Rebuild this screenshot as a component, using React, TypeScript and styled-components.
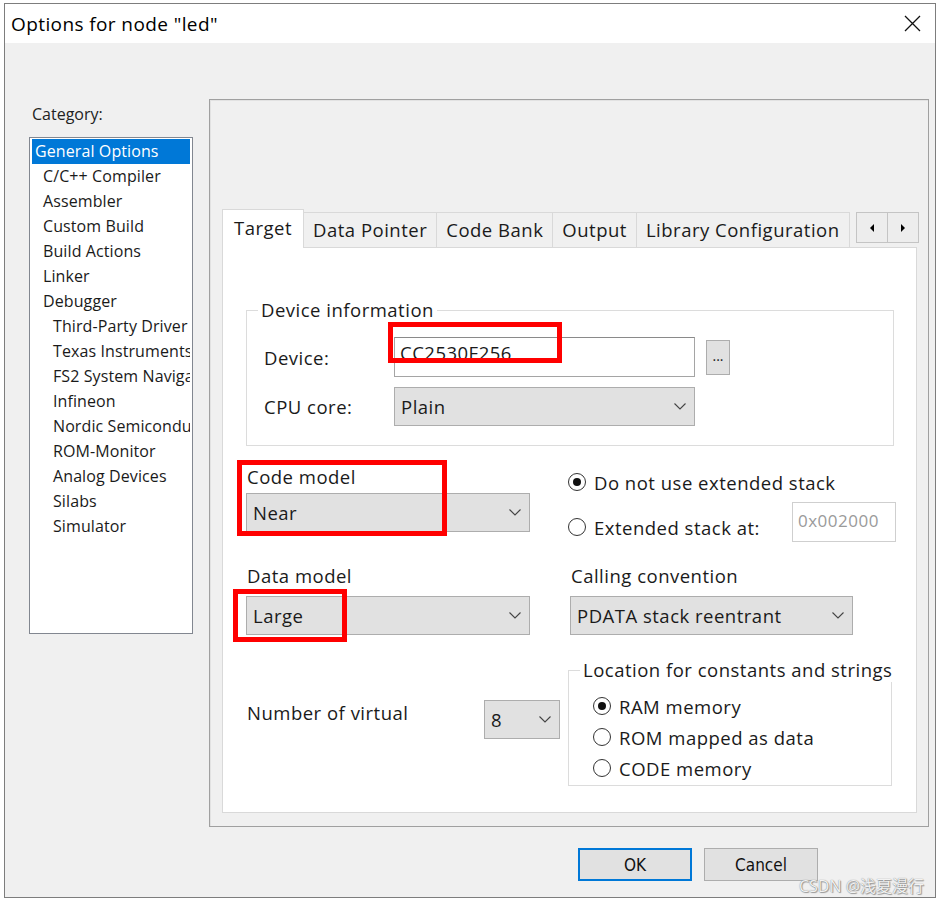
import React from "react";
import styled, { createGlobalStyle } from "styled-components";

/** ===========================================================================
 * Options dialog for a project node
 * ============================================================================
 */

const FONT = `"Open Sans", "Noto Sans", "Noto Sans CJK SC", sans-serif`;

type CategoryItem = { label: string; level: number };

const CATEGORIES: CategoryItem[] = [
  { label: "General Options", level: 0 },
  { label: "C/C++ Compiler", level: 1 },
  { label: "Assembler", level: 1 },
  { label: "Custom Build", level: 1 },
  { label: "Build Actions", level: 1 },
  { label: "Linker", level: 1 },
  { label: "Debugger", level: 1 },
  { label: "Third-Party Driver", level: 2 },
  { label: "Texas Instruments", level: 2 },
  { label: "FS2 System Navigator", level: 2 },
  { label: "Infineon", level: 2 },
  { label: "Nordic Semiconductor", level: 2 },
  { label: "ROM-Monitor", level: 2 },
  { label: "Analog Devices", level: 2 },
  { label: "Silabs", level: 2 },
  { label: "Simulator", level: 2 },
];

const TABS = [
  "Target",
  "Data Pointer",
  "Code Bank",
  "Output",
  "Library Configuration",
];

const INDENT = [3, 11, 21];

const App: React.FC = () => {
  return (
    <Page>
      <GlobalStyle />
      <Dialog>
        <TitleBar>
          <Title>Options for node "led"</Title>
          <CloseIcon />
        </TitleBar>
        <Content>
          <MainRow>
            <Sidebar>
              <CategoryLabel>Category:</CategoryLabel>
              <ListBox>
                {CATEGORIES.map((c, i) => (
                  <ListItem
                    key={c.label}
                    $indent={INDENT[c.level]}
                    $selected={i === 0}
                  >
                    {c.label}
                  </ListItem>
                ))}
              </ListBox>
            </Sidebar>

            <Panel>
              <TabStrip>
                {TABS.map((t, i) => (
                  <Tab key={t} $active={i === 0}>
                    {t}
                  </Tab>
                ))}
                <ArrowGroup>
                  <ArrowButton>
                    <svg width="6" height="8" viewBox="0 0 6 8">
                      <polygon points="5,0 5,8 1,4" fill="#000" />
                    </svg>
                  </ArrowButton>
                  <ArrowButton>
                    <svg width="6" height="8" viewBox="0 0 6 8">
                      <polygon points="1,0 1,8 5,4" fill="#000" />
                    </svg>
                  </ArrowButton>
                </ArrowGroup>
              </TabStrip>

              <TabPage>
                <GroupBox>
                  <GroupLegend $shift={-6}>Device information</GroupLegend>
                  <FieldRow>
                    <FormLabel>Device:</FormLabel>
                    <Annotated>
                      <TextInput $w={301}>CC2530F256</TextInput>
                      <RedBox $l={-6} $t={-15} $w={174} $h={41} />
                    </Annotated>
                    <DotsButton>...</DotsButton>
                  </FieldRow>
                  <FieldRow $gap={10}>
                    <FormLabel>CPU core:</FormLabel>
                    <Select $w={301} value="Plain" />
                  </FieldRow>
                </GroupBox>

                <OptionsGrid>
                  <Cell>
                    <FieldLabel>Code model</FieldLabel>
                    <Select $w={284} $mt={5} value="Near" />
                    <RedBox $l={-9} $t={-6} $w={210} $h={76} />
                  </Cell>
                  <Cell>
                    <RadioLine $mt={4}>
                      <Radio $checked />
                      Do not use extended stack
                    </RadioLine>
                    <StackRow>
                      <RadioLine $mt={13}>
                        <Radio />
                        Extended stack at:
                      </RadioLine>
                      <HexInput>0x002000</HexInput>
                    </StackRow>
                  </Cell>

                  <Cell>
                    <FieldLabel>Data model</FieldLabel>
                    <Annotated $mt={9}>
                      <Select $w={284} value="Large" />
                      <RedBox $l={-13} $t={-7} $w={114} $h={53} />
                    </Annotated>
                  </Cell>
                  <Cell $ml={2}>
                    <FieldLabel>Calling convention</FieldLabel>
                    <Select $w={283} $mt={9} value="PDATA stack reentrant" />
                  </Cell>

                  <VirtualCell>
                    <VirtualLabel>Number of virtual</VirtualLabel>
                    <Select $w={76} value="8" />
                  </VirtualCell>
                  <Cell>
                    <LocationBox>
                      <GroupLegend $shift={-13}>
                        Location for constants and strings
                      </GroupLegend>
                      <RadioLine>
                        <Radio $checked />
                        RAM memory
                      </RadioLine>
                      <RadioLine $mt={7}>
                        <Radio />
                        ROM mapped as data
                      </RadioLine>
                      <RadioLine $mt={7}>
                        <Radio />
                        CODE memory
                      </RadioLine>
                    </LocationBox>
                  </Cell>
                </OptionsGrid>
              </TabPage>
            </Panel>
          </MainRow>

          <ButtonBar>
            <DialogButton $default>OK</DialogButton>
            <DialogButton>Cancel</DialogButton>
          </ButtonBar>
        </Content>
      </Dialog>
      <Watermark>CSDN @浅夏漫行</Watermark>
    </Page>
  );
};

/** ===========================================================================
 * Small drawn parts
 * ============================================================================
 */

const CloseIcon = () => (
  <svg width="17" height="17" viewBox="0 0 17 17">
    <path d="M1 1 L16 16 M16 1 L1 16" stroke="#111" strokeWidth="1.3" />
  </svg>
);

const Chevron = () => (
  <svg width="12" height="7" viewBox="0 0 12 7">
    <polyline
      points="0.5,0.5 6,6 11.5,0.5"
      fill="none"
      stroke="#444"
      strokeWidth="1.1"
    />
  </svg>
);

const Select = (props: { $w: number; $mt?: number; value: string }) => (
  <SelectBox $w={props.$w} $mt={props.$mt}>
    <span>{props.value}</span>
    <Chevron />
  </SelectBox>
);

/** ===========================================================================
 * Styled Components
 * ============================================================================
 */

const GlobalStyle = createGlobalStyle`
  html, body {
    margin: 0;
    padding: 0;
    background: #fff;
  }
  body {
    font-family: ${FONT};
    color: #1a1a1a;
    letter-spacing: 0.5px;
  }
`;

const Page = styled.div`
  position: relative;
  height: 903px;
  padding: 3px 0 0 4px;
  box-sizing: border-box;
  overflow: hidden;
`;

const Dialog = styled.div`
  width: 932px;
  height: 895px;
  box-sizing: border-box;
  border: 1px solid #7d7d7d;
  background: #f0f0f0;
  display: flex;
  flex-direction: column;
`;

const TitleBar = styled.div`
  height: 39px;
  flex: none;
  background: #fff;
  display: flex;
  align-items: center;
  justify-content: space-between;
  padding: 0 14px 0 6px;
`;

const Title = styled.div`
  font-size: 19px;
  letter-spacing: 0.4px;
  color: #000;
`;

const Content = styled.div`
  flex: 1;
  display: flex;
  flex-direction: column;
`;

const MainRow = styled.div`
  display: flex;
  align-items: flex-start;
`;

const Sidebar = styled.div`
  width: 164px;
  padding: 61px 0 0 24px;
  flex: none;
`;

const CategoryLabel = styled.div`
  font-size: 16px;
  line-height: 20px;
  letter-spacing: 0;
  margin: 0 0 13px 3px;
  color: #222;
`;

const ListBox = styled.div`
  width: 164px;
  height: 497px;
  box-sizing: border-box;
  border: 1px solid #828790;
  background: #fff;
  padding: 1px 2px;
  overflow: hidden;
`;

const ListItem = styled.div<{ $indent: number; $selected?: boolean }>`
  height: 25px;
  line-height: 25px;
  font-size: 16px;
  letter-spacing: 0.1px;
  white-space: nowrap;
  overflow: hidden;
  padding-left: ${(p) => p.$indent}px;
  background: ${(p) => (p.$selected ? "#0078d7" : "transparent")};
  color: ${(p) => (p.$selected ? "#fff" : "#1a1a1a")};
`;

const Panel = styled.div`
  margin: 56px 0 0 16px;
  width: 720px;
  height: 728px;
  box-sizing: border-box;
  border: 1px solid #a0a0a0;
  box-shadow: inset 1px 1px 0 #e2e2e2;
  padding: 109px 11px 13px 12px;
  display: flex;
  flex-direction: column;
`;

const TabStrip = styled.div`
  height: 38px;
  flex: none;
  display: flex;
  align-items: flex-end;
  position: relative;
  z-index: 1;
`;

const Tab = styled.div<{ $active?: boolean }>`
  height: ${(p) => (p.$active ? 39 : 35)}px;
  margin-bottom: ${(p) => (p.$active ? -1 : 0)}px;
  margin-left: ${(p) => (p.$active ? 0 : -1)}px;
  padding: 0 ${(p) => (p.$active ? 11 : 9)}px;
  box-sizing: border-box;
  border: 1px solid #d9d9d9;
  border-bottom: none;
  background: ${(p) => (p.$active ? "#fff" : "#f0f0f0")};
  display: flex;
  align-items: center;
  padding-bottom: ${(p) => (p.$active ? 4 : 1)}px;
  font-size: 18.5px;
  white-space: nowrap;
  position: relative;
  z-index: ${(p) => (p.$active ? 2 : 1)};
`;

const ArrowGroup = styled.div`
  margin-left: auto;
  margin-right: -2px;
  align-self: flex-start;
  margin-top: 3px;
  display: flex;
  border: 1px solid #c4c4c4;
  background: #ededed;
`;

const ArrowButton = styled.div`
  width: 30px;
  height: 29px;
  display: flex;
  align-items: center;
  justify-content: center;
  & + & {
    border-left: 1px solid #c4c4c4;
  }
`;

const TabPage = styled.div`
  flex: 1;
  background: #fff;
  border: 1px solid #d9d9d9;
  padding: 50px 22px 0 23px;
`;

const GroupBox = styled.fieldset`
  margin: 0;
  min-width: 0;
  border: 1px solid #dcdcdc;
  padding: 15px 17px 19px;
`;

const GroupLegend = styled.legend<{ $shift: number }>`
  font-size: 18.5px;
  line-height: 24px;
  padding: 0 3px;
  margin-left: ${(p) => p.$shift}px;
  white-space: nowrap;
`;

const FieldRow = styled.div<{ $gap?: number }>`
  display: flex;
  align-items: center;
  margin-top: ${(p) => p.$gap ?? 0}px;
`;

const FormLabel = styled.div`
  width: 130px;
  flex: none;
  font-size: 18.5px;
`;

const Annotated = styled.div<{ $mt?: number }>`
  position: relative;
  margin-top: ${(p) => p.$mt ?? 0}px;
  width: fit-content;
`;

const RedBox = styled.div<{ $l: number; $t: number; $w: number; $h: number }>`
  position: absolute;
  left: ${(p) => p.$l}px;
  top: ${(p) => p.$t}px;
  width: ${(p) => p.$w}px;
  height: ${(p) => p.$h}px;
  box-sizing: border-box;
  border: 5px solid #ff0000;
  z-index: 3;
  pointer-events: none;
`;

const TextInput = styled.div<{ $w: number }>`
  width: ${(p) => p.$w}px;
  height: 40px;
  box-sizing: border-box;
  border: 1px solid #a5a5a5;
  border-top-color: #8a8a8a;
  background: #fff;
  padding: 3px 5px 0;
  font-size: 18.5px;
  line-height: 24px;
`;

const DotsButton = styled.div`
  width: 24px;
  height: 35px;
  margin-left: 11px;
  box-sizing: border-box;
  border: 1px solid #adadad;
  background: #e1e1e1;
  display: flex;
  align-items: center;
  justify-content: center;
  font-size: 14px;
  letter-spacing: 0;
  padding-bottom: 4px;
`;

const SelectBox = styled.div<{ $w: number; $mt?: number }>`
  width: ${(p) => p.$w}px;
  height: 39px;
  flex: none;
  margin-top: ${(p) => p.$mt ?? 0}px;
  box-sizing: border-box;
  border: 1px solid #adadad;
  background: #e1e1e1;
  display: flex;
  align-items: center;
  justify-content: space-between;
  padding: 0 8px 0 6px;
  font-size: 18.5px;
`;

const OptionsGrid = styled.div`
  margin-top: 20px;
  display: grid;
  grid-template-columns: 284px 326px;
  column-gap: 38px;
  row-gap: 23px;
`;

const Cell = styled.div<{ $ml?: number }>`
  position: relative;
  display: flex;
  flex-direction: column;
  margin-left: ${(p) => p.$ml ?? 0}px;
`;

const FieldLabel = styled.div`
  font-size: 18.5px;
  line-height: 22px;
  padding-left: 1px;
`;

const RadioLine = styled.div<{ $mt?: number }>`
  display: flex;
  align-items: center;
  gap: 8px;
  height: 24px;
  margin-top: ${(p) => p.$mt ?? 0}px;
  font-size: 18.5px;
  white-space: nowrap;
`;

const Radio = styled.span<{ $checked?: boolean }>`
  width: 18px;
  height: 18px;
  flex: none;
  box-sizing: border-box;
  border-radius: 50%;
  border: 1px solid #333;
  background: #fff;
  display: flex;
  align-items: center;
  justify-content: center;

  &::after {
    content: "";
    width: 8px;
    height: 8px;
    border-radius: 50%;
    background: #111;
    display: ${(p) => (p.$checked ? "block" : "none")};
  }
`;

const StackRow = styled.div`
  display: flex;
  align-items: flex-start;
  justify-content: space-between;
  margin-top: 8px;
  margin-right: -2px;
`;

const HexInput = styled.div`
  width: 104px;
  height: 40px;
  box-sizing: border-box;
  border: 1px solid #cfcfcf;
  background: #fff;
  color: #9a9a9a;
  font-size: 17px;
  padding-left: 5px;
  display: flex;
  align-items: center;
  padding-bottom: 3px;
`;

const VirtualCell = styled.div`
  display: flex;
  align-items: flex-start;
  padding-top: 42px;
`;

const VirtualLabel = styled.div`
  width: 238px;
  flex: none;
  font-size: 18.5px;
  line-height: 22px;
  margin-top: 2px;
  padding-left: 1px;
  box-sizing: border-box;
`;

const LocationBox = styled.fieldset`
  margin: 0;
  min-width: 0;
  width: 324px;
  box-sizing: border-box;
  border: 1px solid #dcdcdc;
  padding: 12px 10px 5px 24px;
`;

const ButtonBar = styled.div`
  display: flex;
  justify-content: flex-end;
  gap: 12px;
  margin-top: 21px;
  padding-right: 117px;
`;

const DialogButton = styled.div<{ $default?: boolean }>`
  width: 114px;
  height: 33px;
  box-sizing: border-box;
  border: ${(p) => (p.$default ? "2px solid #0078d7" : "1px solid #adadad")};
  background: #e1e1e1;
  display: flex;
  align-items: center;
  justify-content: center;
  font-family: "DejaVu Sans Condensed", "Liberation Sans Narrow", sans-serif;
  font-stretch: condensed;
  font-size: 17px;
  letter-spacing: 0;
  color: #111;
`;

const Watermark = styled.div`
  position: absolute;
  right: 16px;
  bottom: 6px;
  font-family: ${FONT};
  font-size: 16px;
  letter-spacing: 0;
  color: rgba(255, 255, 255, 0.92);
  text-shadow: 0 0 1px #666, 1px 1px 1px rgba(0, 0, 0, 0.35);
`;

/** ===========================================================================
 * Export
 * ============================================================================
 */

export default App;
